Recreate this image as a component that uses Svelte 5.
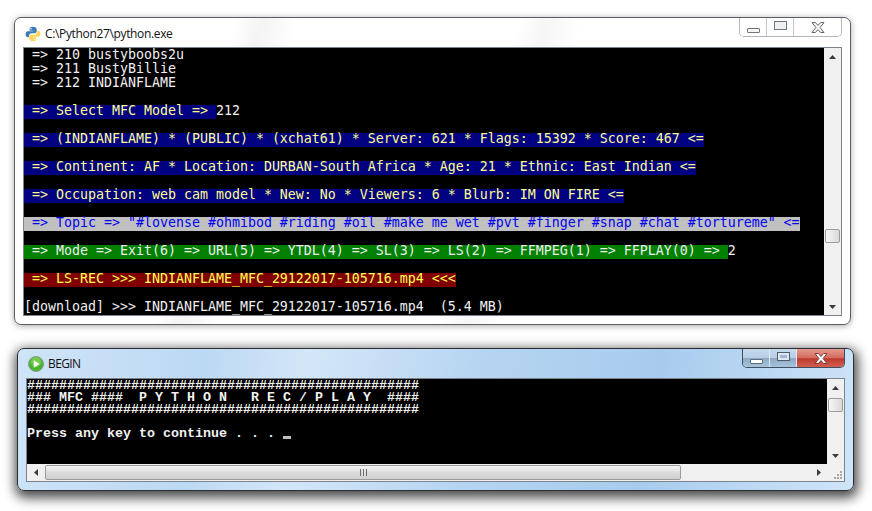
<script>
  const rows = [
    { text: ' => 210 bustyboobs2u' },
    { text: ' => 211 BustyBillie' },
    { text: ' => 212 INDIANFLAME' },
    {},
    { band: ' => Select MFC Model => ', kind: 'navy', text: '212' },
    {},
    { band: ' => (INDIANFLAME) * (PUBLIC) * (xchat61) * Server: 621 * Flags: 15392 * Score: 467 <=', kind: 'navy' },
    {},
    { band: ' => Continent: AF * Location: DURBAN-South Africa * Age: 21 * Ethnic: East Indian <=', kind: 'navy' },
    {},
    { band: ' => Occupation: web cam model * New: No * Viewers: 6 * Blurb: IM ON FIRE <=', kind: 'navy' },
    {},
    { band: ' => Topic => "#lovense #ohmibod #riding #oil #make me wet #pvt #finger #snap #chat #tortureme" <=', kind: 'grey' },
    {},
    { band: ' => Mode => Exit(6) => URL(5) => YTDL(4) => SL(3) => LS(2) => FFMPEG(1) => FFPLAY(0) => ', kind: 'green', text: '2' },
    {},
    { band: ' => LS-REC >>> INDIANFLAME_MFC_29122017-105716.mp4 <<<', kind: 'red' },
    {},
    { text: '[download] >>> INDIANFLAME_MFC_29122017-105716.mp4  (5.4 MB)' }
  ];
  const hashes = '#'.repeat(49);
  const banner = [hashes, '### MFC ####  P Y T H O N   R E C / P L A Y  ####', hashes, ''];
</script>

<div class="desktop">
  <!-- background python window -->
  <section class="win back">
    <header class="titlebar">
      <svg class="appicon" viewBox="0 0 16 16" width="16" height="16">
        <path fill="#3d7cb4" d="M8 .8c-3 0-3.4 1.2-3.4 2.4v1.5h3.6v.6H3C1.6 5.3.6 6.4.6 8.2c0 1.9.9 3 2.2 3h1.3V9.500c0-1.300 1.100-2.300 2.400-2.300h3.300c1 0 1.900-.9 1.900-2V3.200C11.700 1.700 10.300.8 8 .8zM6 2a.7.7 0 1 1 0 1.500A.7.7 0 0 1 6 2z"/>
        <path fill="#fdd65a" d="M8 15.200c3 0 3.400-1.200 3.400-2.400v-1.500H7.800v-.6H13c1.400 0 2.400-1.100 2.400-2.900 0-1.900-.9-3-2.200-3h-1.300v1.700c0 1.300-1.100 2.300-2.400 2.300H6.200c-1 0-1.900.9-1.900 2v2c0 1.500 1.400 2.400 3.700 2.400zM10 14a.7.7 0 1 1 0-1.500.7.7 0 0 1 0 1.500z"/>
      </svg>
      <span class="caption">C:\Python27\python.exe</span>
      <div class="controls">
        <span class="ctl min"><i></i></span>
        <span class="ctl max"><i></i></span>
        <span class="ctl close">
          <svg viewBox="0 0 14 11" width="14" height="11"><path fill="#f6f7f8" stroke="#5f656c" d="M1 .6h3.400L7 3.400 9.600.6H13L9.100 5.500l3.900 5H9.600L7 7.600l-2.600 2.900H1l3.900-5z"/></svg>
        </span>
      </div>
    </header>
    <div class="client">
      <div class="console con-a">
        {#each rows as row}
          <div class="row">{#if row.band}<span class="band {row.kind}">{row.band}</span>{/if}{row.text ?? ''}</div>
        {/each}
      </div>
      <div class="vbar">
        <span class="arrow"><svg viewBox="0 0 7 4" width="7" height="4"><path d="M3.500 0 7 4H0z"/></svg></span>
        <span class="thumb thumb-a"></span>
        <span class="arrow end"><svg viewBox="0 0 7 4" width="7" height="4"><path d="M0 0h7L3.500 4z"/></svg></span>
      </div>
    </div>
  </section>

  <!-- active batch window -->
  <section class="win front">
    <header class="titlebar">
      <svg class="appicon play" viewBox="0 0 16 16" width="16" height="16">
        <circle cx="8" cy="8" r="7.500" fill="#48b52f" stroke="#8d9a8d"/>
        <circle cx="8" cy="6" r="5" fill="#8fdc6a" opacity=".6"/>
        <path fill="#fff" d="M5.800 4.200 11.500 8l-5.700 3.800z"/>
      </svg>
      <span class="caption">BEGIN</span>
      <div class="controls">
        <span class="ctl min"><i></i></span>
        <span class="ctl max"><i></i></span>
        <span class="ctl close">
          <svg viewBox="0 0 14 11" width="14" height="11"><path fill="#fff" stroke="#7d3a34" d="M1 .6h3.400L7 3.400 9.600.6H13L9.100 5.500l3.900 5H9.600L7 7.600l-2.600 2.900H1l3.900-5z"/></svg>
        </span>
      </div>
    </header>
    <div class="client split">
      <div class="console con-b">
        {#each banner as line}
          <div class="rasterrow">{line}</div>
        {/each}
        <div class="rasterrow">Press any key to continue . . . <span class="cursor"></span></div>
      </div>
      <div class="vbar">
        <span class="arrow"><svg viewBox="0 0 7 4" width="7" height="4"><path d="M3.500 0 7 4H0z"/></svg></span>
        <span class="thumb thumb-b"></span>
        <span class="arrow end"><svg viewBox="0 0 7 4" width="7" height="4"><path d="M0 0h7L3.500 4z"/></svg></span>
      </div>
      <div class="hbar">
        <span class="arrow side"><svg viewBox="0 0 4 7" width="4" height="7"><path d="M4 0v7L0 3.500z"/></svg></span>
        <span class="hthumb"><b></b></span>
        <span class="arrow side end"><svg viewBox="0 0 4 7" width="4" height="7"><path d="M0 0v7l4-3.500z"/></svg></span>
      </div>
      <div class="corner">
        <svg viewBox="0 0 9 9" width="9" height="9"><path fill="#a8a8a8" d="M7 0h2v2H7zM4 3h2v2H4zM7 3h2v2H7zM1 6h2v2H1zM4 6h2v2H4zM7 6h2v2H7z"/></svg>
      </div>
    </div>
  </section>
</div>

<style>
:global(body) { background:#fff; }
.desktop { position:relative; width:872px; height:511px; overflow:hidden; background:#fff; }

.win { position:absolute; width:837px; box-sizing:border-box; border:1px solid #5a5f66; border-radius:7px; padding:0 8px 8px; }
.win.back { left:14px; top:17px; background:linear-gradient(105deg,#fff 0 24%,#f4f4f4 27%,#fff 31% 55%,#f6f6f6 58%,#fff 62%); box-shadow:0 1px 6px rgba(0,0,0,.35); }
.win.front { left:17px; top:348px; border-color:#2b2f33; background:linear-gradient(100deg,#cfe4f8 0,#bcd9f3 22%,#d3e6f8 34%,#b5d4f1 55%,#a8cbed 75%,#cfe5f9 100%); box-shadow:1px 4px 12px 3px rgba(0,0,0,.7); }

.titlebar { display:flex; align-items:flex-start; height:29px; }
.appicon { margin:8px 0 0 2px; flex:none; }
.caption { margin:8px 0 0 4px; font:12px/16px "Open Sans",sans-serif; letter-spacing:-.35px; color:#111; white-space:pre; }
.front .appicon { margin-left:2px; margin-top:7px; }
.front .caption { margin:7px 0 0 4px; letter-spacing:-.6px; }

.controls { display:flex; margin-left:auto; height:19px; border:1px solid #b3b7bc; border-top:0; border-radius:0 0 5px 5px; box-sizing:border-box; overflow:hidden; }
.ctl { display:flex; align-items:center; justify-content:center; box-sizing:border-box; width:27px; border-right:1px solid #c4c7cb; background:#fff; }
.ctl.close { width:47px; border-right:0; }
.min i { display:block; width:11px; height:3px; margin-top:6px; background:#f4f5f7; border:1px solid #6f757c; border-radius:1px; }
.max i { display:block; width:7px; height:3px; margin-top:-3px; background:#eee; border:2px solid #f0f1f3; outline:1px solid #6f757c; }
.front .controls { border-color:#3e4f60; height:19px; }
.front .ctl { background:linear-gradient(#c5d9ec,#b7cee4 50%,#8ea9c4 52%,#a8c3dc); border-right-color:#dfe9f3; }
.front .ctl.close { background:linear-gradient(#e59a8f,#d4685b 50%,#bb3a2c 54%,#d2604f); }
.front .min i { background:#fff; border-color:#5f6f80; }
.front .max i { border-color:#dfe8f1; background:#9fb7cf; outline-color:#4d5d6e; }

.client { display:flex; border:1px solid #7d838a; background:#f0f0f0; }
.client.split { display:grid; grid-template-columns:800px 17px; grid-template-rows:85px 17px; }
.console { width:800px; background:#000; box-sizing:border-box; }
.con-a { height:267px; padding-top:1px; font:13.29px/12px "DejaVu Sans Mono",monospace; color:#f0f0f0; }
.con-b { padding-top:1px; font:bold 13.33px/12px "Liberation Mono",monospace; color:#f2f2f2; overflow:hidden; }
.row { height:14px; white-space:pre; }
.rasterrow { height:12px; white-space:pre; }
.band { display:inline-block; height:14px; vertical-align:top; }
.navy { background:#000080; color:#ffff8c; }
.grey { background:#c0c0c0; color:#0000f0; }
.green { background:#008000; color:#ededed; }
.red { background:#800000; color:#ffff55; }
.cursor { display:inline-block; width:8px; height:3px; background:#c0c0c0; vertical-align:-2px; }

.vbar { display:flex; flex-direction:column; width:17px; background:#f0f0f0; }
.arrow { display:flex; align-items:center; justify-content:center; flex:none; height:17px; width:17px; fill:#3c3c3c; }
.arrow.end { margin-top:auto; }
.thumb { display:block; flex:none; width:15px; margin-left:1px; height:14px; box-sizing:border-box; border:1px solid #9b9b9b; border-radius:2px; background:linear-gradient(90deg,#f8f8f8,#d9d9d9); }
.thumb-a { margin-top:164px; }
.thumb-b { margin-top:2px; }

.hbar { display:flex; height:17px; background:#f0f0f0; }
.arrow.side.end { margin-top:0; margin-left:auto; }
.hthumb { display:flex; align-items:center; justify-content:center; width:636px; height:15px; margin:1px 0 0 1px; box-sizing:border-box; border:1px solid #9b9b9b; border-radius:2px; background:linear-gradient(#f6f6f6,#dcdcdc 50%,#cfcfcf); }
.hthumb b { display:block; width:7px; height:7px; background:repeating-linear-gradient(90deg,#6e6e6e 0 1px,transparent 1px 3px); }
.corner { display:flex; align-items:flex-end; justify-content:flex-end; padding:0 2px 1px 0; box-sizing:border-box; }
</style>
